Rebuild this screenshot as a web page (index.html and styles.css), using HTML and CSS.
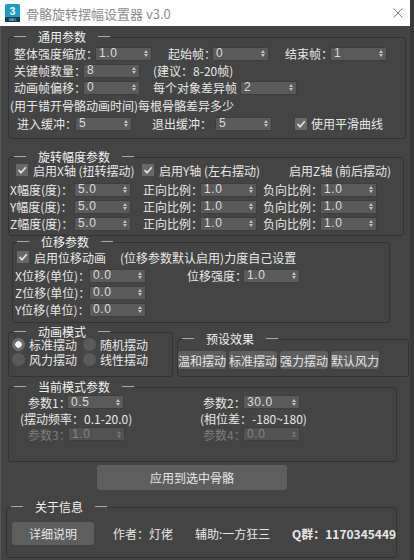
FILE: index.html
```html
<!DOCTYPE html>
<html lang="zh-CN">
<head>
    <meta charset="UTF-8">
    <meta name="viewport" content="width=device-width, initial-scale=1.0">
    <title>骨骼旋转摆幅设置器 v3.0</title>
    <link rel="stylesheet" href="styles.css">
</head>
<body>
<div class="window">

    <div class="titlebar">
        <svg class="app-icon" viewBox="0 0 15 18">
            <rect x="0" y="0" width="15" height="18" rx="1.5" fill="#1d9cc2"/>
            <rect x="0" y="13" width="15" height="5" fill="#173c55"/>
            <text x="7.5" y="10.5" text-anchor="middle" font-family="Liberation Sans" font-weight="bold" font-size="10" fill="#fff">3</text>
            <text x="7.5" y="17" text-anchor="middle" font-family="Liberation Sans" font-size="3.5" fill="#9fd3e6">MAX</text>
        </svg>
        <span class="title">骨骼旋转摆幅设置器 v3.0</span>
        <svg class="close" viewBox="0 0 10 10">
            <path d="M0.5 0.5 L9.5 9.5 M9.5 0.5 L0.5 9.5" stroke="#7a7a7a" stroke-width="1"/>
        </svg>
    </div>

    <div class="content">

        <!-- 通用参数 -->
        <div class="group g-general">
            <div class="legend">─　通用参数　─</div>
            <div class="row first">
                <span class="w81">整体强度缩放：</span>
                <span class="spin"><span class="val">1.0</span><i class="arr"></i></span>
                <span class="ml16 w44">起始帧：</span>
                <span class="spin"><span class="val">0</span><i class="arr"></i></span>
                <span class="ml16 w45">结束帧：</span>
                <span class="spin"><span class="val">1</span><i class="arr"></i></span>
            </div>
            <div class="row">
                <span class="w69">关键帧数量：</span>
                <span class="spin"><span class="val">8</span><i class="arr"></i></span>
                <span class="ml13">(建议：8-20帧)</span>
            </div>
            <div class="row">
                <span class="w69">动画帧偏移：</span>
                <span class="spin"><span class="val">0</span><i class="arr"></i></span>
                <span class="ml13 w87">每个对象差异帧</span>
                <span class="spin"><span class="val">2</span><i class="arr"></i></span>
            </div>
            <div class="row gap1 note">
                <span>(用于错开骨骼动画时间)每根骨骼差异多少</span>
            </div>
            <div class="row gap1">
                <span class="ml3 w58">进入缓冲：</span>
                <span class="spin"><span class="val">5</span><i class="arr"></i></span>
                <span class="ml20 w63">退出缓冲：</span>
                <span class="spin"><span class="val">5</span><i class="arr"></i></span>
                <span class="chk ml23"><svg viewBox="0 0 12 12"><rect width="12" height="12" fill="#686868"/><polyline points="2.5,6 5,8.7 9.8,3.2" fill="none" stroke="#e4e4e4" stroke-width="1.7"/></svg></span>
                <span class="ml4">使用平滑曲线</span>
            </div>
        </div>

        <!-- 旋转幅度参数 -->
        <div class="group g-rotate">
            <div class="legend">─　旋转幅度参数　─</div>
            <div class="row checks">
                <span class="check-item ml6 w126">
                    <span class="chk"><svg viewBox="0 0 12 12"><rect width="12" height="12" fill="#686868"/><polyline points="2.5,6 5,8.7 9.8,3.2" fill="none" stroke="#e4e4e4" stroke-width="1.7"/></svg></span>
                    <span>启用X轴 (扭转摆动)</span>
                </span>
                <span class="check-item w147">
                    <span class="chk"><svg viewBox="0 0 12 12"><rect width="12" height="12" fill="#686868"/><polyline points="2.5,6 5,8.7 9.8,3.2" fill="none" stroke="#e4e4e4" stroke-width="1.7"/></svg></span>
                    <span>启用Y轴 (左右摆动)</span>
                </span>
                <span>启用Z轴 (前后摆动)</span>
            </div>
            <div class="row axis first-axis">
                <span class="w64">X幅度(度)：</span>
                <span class="spin"><span class="val">5.0</span><i class="arr"></i></span>
                <span class="ml12 w57">正向比例：</span>
                <span class="spin"><span class="val">1.0</span><i class="arr"></i></span>
                <span class="ml6 w57">负向比例：</span>
                <span class="spin"><span class="val">1.0</span><i class="arr"></i></span>
            </div>
            <div class="row axis">
                <span class="w64">Y幅度(度)：</span>
                <span class="spin"><span class="val">5.0</span><i class="arr"></i></span>
                <span class="ml12 w57">正向比例：</span>
                <span class="spin"><span class="val">1.0</span><i class="arr"></i></span>
                <span class="ml6 w57">负向比例：</span>
                <span class="spin"><span class="val">1.0</span><i class="arr"></i></span>
            </div>
            <div class="row axis">
                <span class="w64">Z幅度(度)：</span>
                <span class="spin"><span class="val">5.0</span><i class="arr"></i></span>
                <span class="ml12 w57">正向比例：</span>
                <span class="spin"><span class="val">1.0</span><i class="arr"></i></span>
                <span class="ml6 w57">负向比例：</span>
                <span class="spin"><span class="val">1.0</span><i class="arr"></i></span>
            </div>
        </div>

        <!-- 位移参数 -->
        <div class="group g-move">
            <div class="legend">─　位移参数　─</div>
            <div class="row checks">
                <span class="chk ml4"><svg viewBox="0 0 12 12"><rect width="12" height="12" fill="#686868"/><polyline points="2.5,6 5,8.7 9.8,3.2" fill="none" stroke="#e4e4e4" stroke-width="1.7"/></svg></span>
                <span class="ml5">启用位移动画</span>
                <span class="ml14">(位移参数默认启用)力度自己设置</span>
            </div>
            <div class="row first-axis">
                <span class="ml2 w74">X位移(单位)：</span>
                <span class="spin"><span class="val">0.0</span><i class="arr"></i></span>
                <span class="ml41 w56">位移强度：</span>
                <span class="spin"><span class="val">1.0</span><i class="arr"></i></span>
            </div>
            <div class="row">
                <span class="ml2 w74">Z位移(单位)：</span>
                <span class="spin"><span class="val">0.0</span><i class="arr"></i></span>
            </div>
            <div class="row">
                <span class="ml2 w74">Y位移(单位)：</span>
                <span class="spin"><span class="val">0.0</span><i class="arr"></i></span>
            </div>
        </div>

        <div class="split">
            <!-- 动画模式 -->
            <div class="group g-mode">
                <div class="legend">─　动画模式　─</div>
                <div class="row radios first-radio">
                    <span class="radio-item ml3"><span class="radio on"></span>标准摆动</span>
                    <span class="radio-item"><span class="radio"></span>随机摆动</span>
                </div>
                <div class="row radios">
                    <span class="radio-item ml3"><span class="radio"></span>风力摆动</span>
                    <span class="radio-item"><span class="radio"></span>线性摆动</span>
                </div>
            </div>

            <!-- 预设效果 -->
            <div class="group g-preset">
                <div class="legend">─　预设效果　─</div>
                <div class="presets">
                    <span class="pbtn">温和摆动</span>
                    <span class="pbtn">标准摆动</span>
                    <span class="pbtn">强力摆动</span>
                    <span class="pbtn">默认风力</span>
                </div>
            </div>
        </div>

        <!-- 当前模式参数 -->
        <div class="group g-current">
            <div class="legend">─　当前模式参数　─</div>
            <div class="cols">
                <div class="col col-left">
                    <div class="row">
                        <span class="ml19 w39">参数1：</span>
                        <span class="spin"><span class="val">0.5</span><i class="arr"></i></span>
                    </div>
                    <div class="row">
                        <span class="ml11">(摆动频率：0.1-20.0)</span>
                    </div>
                    <div class="row">
                        <span class="ml19 w40 disabled">参数3：</span>
                        <span class="spin disabled"><span class="val">1.0</span><i class="arr"></i></span>
                    </div>
                </div>
                <div class="col">
                    <div class="row">
                        <span class="ml3 w40">参数2：</span>
                        <span class="spin"><span class="val">30.0</span><i class="arr"></i></span>
                    </div>
                    <div class="row">
                        <span>(相位差：-180~180)</span>
                    </div>
                    <div class="row">
                        <span class="ml3 w40 disabled">参数4：</span>
                        <span class="spin disabled"><span class="val">0.0</span><i class="arr"></i></span>
                    </div>
                </div>
            </div>
        </div>

        <div class="apply">应用到选中骨骼</div>

        <!-- 关于信息 -->
        <div class="group g-about">
            <div class="legend">─　关于信息　─</div>
            <div class="about-row">
                <span class="btn-help">详细说明</span>
                <span class="ml19 w82">作者：灯佬</span>
                <span class="w97">辅助:一方狂三</span>
                <span class="qq">Q群：1170345449</span>
            </div>
        </div>

    </div>
</div>
</body>
</html>
```

FILE: styles.css
```css
* {
    box-sizing: border-box;
}

html, body {
    margin: 0;
}

body {
    width: 414px;
    height: 560px;
    overflow: hidden;
    background-color: #3a3a3a;
    font-family: "Noto Sans CJK SC", "Noto Sans", sans-serif;
    font-size: 12px;
    color: #e8e8e8;
}

.window {
    width: 410px;
    height: 560px;
    background-color: #444;
    overflow: hidden;
    box-shadow: inset 1px 0 0 #575757;
}

/* title bar */
.titlebar {
    height: 26px;
    background-color: #fff;
    display: flex;
    align-items: center;
    padding-left: 5px;
}

.app-icon {
    width: 15px;
    height: 18px;
}

.title {
    margin-left: 6px;
    color: #8c8c8c;
    font-size: 13px;
}

.close {
    width: 10px;
    height: 10px;
    margin-left: auto;
    margin-right: 7px;
}

/* group boxes */
.group {
    border: 1px solid #333;
    border-radius: 3px;
}

.legend {
    width: fit-content;
    height: 12px;
    line-height: 12px;
    margin-top: -7px;
    background-color: #444;
    color: #f2f2f2;
    white-space: nowrap;
    font-variant-east-asian: full-width;
}

.row {
    display: flex;
    align-items: center;
    height: 17px;
    line-height: 13px;
    white-space: nowrap;
}

.row > * {
    flex-shrink: 0;
}

.g-general {
    margin: 11px 0 0 8px;
    width: 398px;
    padding: 0 0 6px 5px;
}
.g-general .legend { margin-left: 0; }
.g-general .first { margin-top: 2px; }
.g-general .gap1 { margin-top: 1px; }
.g-general .note { margin-left: -4px; }

.g-rotate {
    margin: 18px 0 0 8px;
    width: 396px;
    padding: 0 0 3px 1px;
}
.g-rotate .legend { margin-left: 4px; }
.g-rotate .checks { height: 16px; margin-top: -1px; }
.g-rotate .first-axis { margin-top: 3px; }

.check-item {
    display: flex;
    align-items: center;
    gap: 5px;
}

.g-move {
    margin: 6px 0 0 12px;
    width: 378px;
    padding: 0 0 4px 0;
}
.g-move .legend { margin-left: 4px; }
.g-move .checks { height: 16px; margin-top: 1px; }
.g-move .first-axis { margin-top: 2px; }

.split {
    display: flex;
    align-items: flex-start;
    margin-top: 9px;
}

.g-mode {
    margin-left: 8px;
    width: 165px;
    padding-bottom: 9px;
}
.g-mode .legend { margin-left: 5px; }
.g-mode .radios { height: 15px; }
.g-mode .first-radio { margin-top: -1px; }

.radio-item {
    display: flex;
    align-items: center;
    gap: 4px;
    width: 71px;
}

.radio {
    width: 13px;
    height: 13px;
    border-radius: 50%;
    background-color: #5a5a5a;
}

.radio.on {
    background: radial-gradient(circle, #f4f4f4 0 3px, #6c6c6c 3.6px);
}

.g-preset {
    margin: 7px 0 0 4px;
    width: 232px;
    padding-bottom: 7px;
}
.g-preset .legend { margin-left: 4px; }

.presets {
    display: flex;
    gap: 3px;
    margin-top: 6px;
}

.pbtn {
    width: 48px;
    height: 18px;
    display: flex;
    align-items: center;
    justify-content: center;
    background-color: #5e5e5e;
    border-radius: 3px;
    color: #e6e6e6;
    white-space: nowrap;
}

.g-current {
    margin: 10px 0 0 8px;
    width: 389px;
    padding-bottom: 19px;
}
.g-current .legend { margin-left: 5px; }
.g-current .row { height: 16px; }

.cols {
    display: flex;
    margin-top: 1px;
}

.col-left {
    width: 191px;
}

.disabled {
    color: #7c7c7c;
}

.apply {
    margin: 3px 0 0 97px;
    width: 190px;
    height: 25px;
    display: flex;
    align-items: center;
    justify-content: center;
    background-color: #5e5e5e;
    border-radius: 3px;
    color: #e6e6e6;
}

.g-about {
    margin: 17px 0 0 6px;
    width: 391px;
    padding-bottom: 12px;
}
.g-about .legend { margin-left: 4px; }

.about-row {
    display: flex;
    align-items: center;
    margin-top: 9px;
    white-space: nowrap;
}

.about-row > * {
    flex-shrink: 0;
}

.btn-help {
    margin-left: 5px;
    width: 82px;
    height: 23px;
    display: flex;
    align-items: center;
    justify-content: center;
    background-color: #5e5e5e;
    border-radius: 3px;
    color: #e6e6e6;
}

.qq {
    font-weight: bold;
}

/* spinner */
.spin {
    display: flex;
    align-items: center;
    width: 57px;
    height: 14px;
    padding-left: 3px;
    background-color: #5a5a5a;
    border: 1px solid #3e3e3e;
    font-family: "Liberation Sans", sans-serif;
    font-size: 12px;
    letter-spacing: 0.6px;
    color: #dcdcdc;
}

.spin .val {
    flex: 1;
}

.arr {
    display: flex;
    flex-direction: column;
    gap: 1px;
    margin-right: 3px;
}

.arr::before {
    content: "";
    border-left: 2.5px solid transparent;
    border-right: 2.5px solid transparent;
    border-bottom: 3px solid #c4c4c4;
}

.arr::after {
    content: "";
    border-left: 2.5px solid transparent;
    border-right: 2.5px solid transparent;
    border-top: 3px solid #c4c4c4;
}

.spin.disabled {
    background-color: #525252;
    color: #858585;
}

.spin.disabled .arr::before { border-bottom-color: #7a7a7a; }
.spin.disabled .arr::after { border-top-color: #7a7a7a; }

/* checkbox */
.chk {
    width: 12px;
    height: 12px;
    display: block;
}

.chk svg {
    display: block;
    width: 12px;
    height: 12px;
}

/* spacing helpers */
.ml2 { margin-left: 2px; }
.ml3 { margin-left: 3px; }
.ml4 { margin-left: 4px; }
.ml5 { margin-left: 5px; }
.ml6 { margin-left: 6px; }
.ml11 { margin-left: 11px; }
.ml12 { margin-left: 12px; }
.ml13 { margin-left: 13px; }
.ml14 { margin-left: 14px; }
.ml16 { margin-left: 16px; }
.ml19 { margin-left: 19px; }
.ml20 { margin-left: 20px; }
.ml23 { margin-left: 23px; }
.ml41 { margin-left: 41px; }

.w39 { width: 39px; }
.w40 { width: 40px; }
.w44 { width: 44px; }
.w45 { width: 45px; }
.w56 { width: 56px; }
.w57 { width: 57px; }
.w58 { width: 58px; }
.w63 { width: 63px; }
.w64 { width: 64px; }
.w69 { width: 69px; }
.w74 { width: 74px; }
.w81 { width: 81px; }
.w82 { width: 82px; }
.w87 { width: 87px; }
.w97 { width: 97px; }
.w126 { width: 126px; }
.w147 { width: 147px; }
```
